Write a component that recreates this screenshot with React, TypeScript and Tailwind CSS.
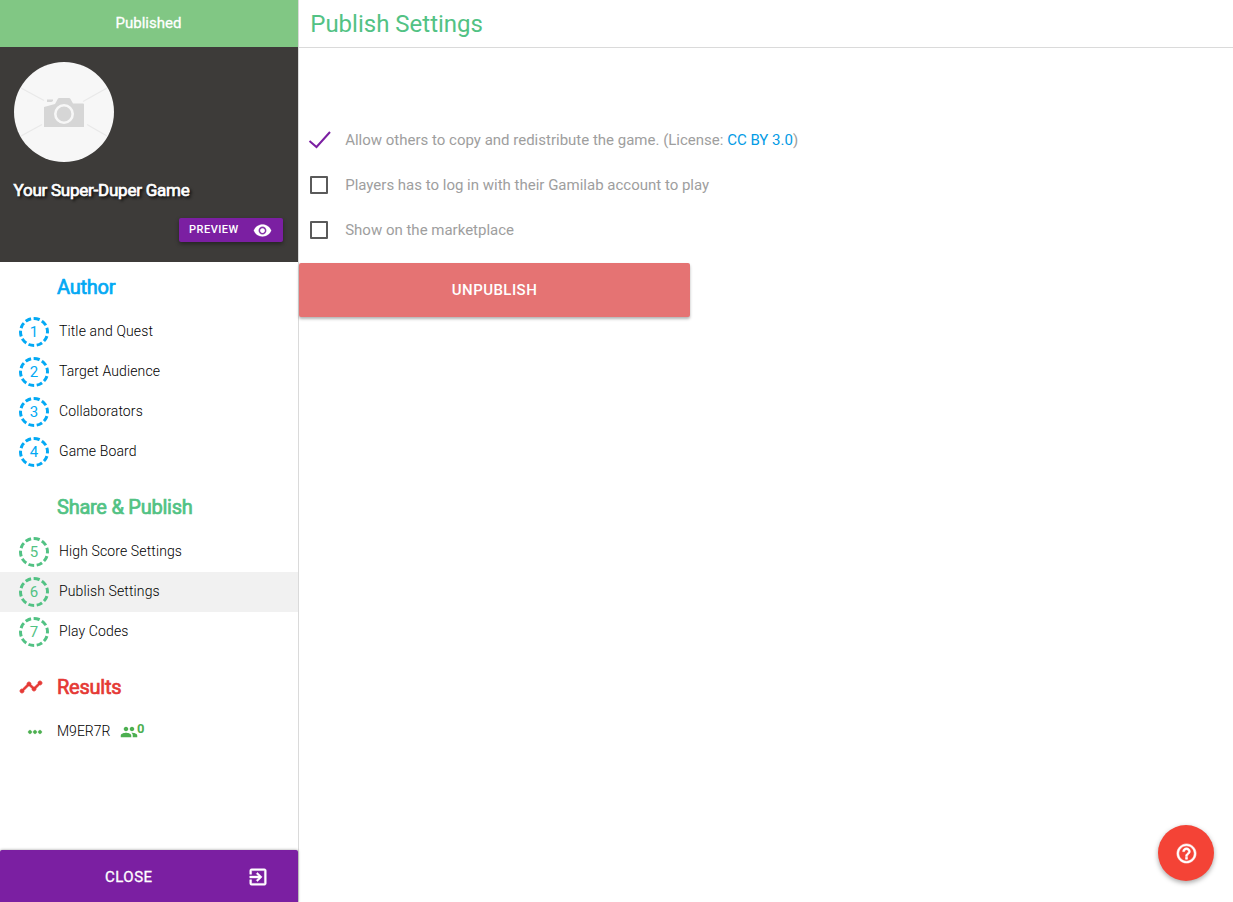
import React from "react";
import {
  MdExitToApp,
  MdHelpOutline,
  MdMoreHoriz,
  MdPeople,
  MdRemoveRedEye,
  MdTimeline,
} from "react-icons/md";

type Step = { n: number; label: string; active?: boolean };

const authorSteps: Step[] = [
  { n: 1, label: "Title and Quest" },
  { n: 2, label: "Target Audience" },
  { n: 3, label: "Collaborators" },
  { n: 4, label: "Game Board" },
];

const publishSteps: Step[] = [
  { n: 5, label: "High Score Settings" },
  { n: 6, label: "Publish Settings", active: true },
  { n: 7, label: "Play Codes" },
];

function StepRow({ step, tone }: { step: Step; tone: string }) {
  return (
    <li className={`flex h-10 items-center pl-[19px] ${step.active ? "bg-[#f1f1f1]" : ""}`}>
      <span
        className={`flex size-[30px] shrink-0 items-center justify-center rounded-full border-3 border-dashed text-[15px] leading-6 ${tone}`}
      >
        {step.n}
      </span>
      <span className="ml-2.5 pb-0.5 text-sm font-light tracking-[0.12px] text-black">{step.label}</span>
    </li>
  );
}

function GroupTitle({ children, tone, icon }: { children: React.ReactNode; tone: string; icon?: React.ReactNode }) {
  return (
    <h2 className={`flex h-[50px] items-center text-xl tracking-[-0.25px] ${tone}`}>
      <span className="flex w-[57px] shrink-0 pl-[19px]">{icon}</span>
      <span className="[-webkit-text-stroke:0.7px_currentColor]">{children}</span>
    </h2>
  );
}

function PhotoPlaceholder() {
  return (
    <svg viewBox="0 0 100 100" className="size-[100px] rounded-full bg-[#f7f7f7]">
      <g stroke="#e9e9e9" strokeWidth="1.3">
        <path d="M7 26 30 38.500M93 26 69 39.500M7 74 28 62.500M93 74 73 62.500" />
      </g>
      <path
        fill="#d6d6d6"
        d="M30 45 41 42 44 36.500Q44.500 36 45 36H55Q56 36 56.500 37L59 41.500H69Q70 41.500 70 42.500V65H30ZM33 37.500H39V39L37.500 40H33Z"
      />
      <circle cx="50" cy="52" r="8.700" fill="#d6d6d6" stroke="#f7f7f7" strokeWidth="2.600" />
    </svg>
  );
}

function Option({ checked, children }: { checked?: boolean; children: React.ReactNode }) {
  return (
    <label className="flex h-[45px] items-center">
      <span className="flex w-[46.2px] shrink-0 pb-px pl-2.5">
        {checked ? (
          <svg viewBox="0 0 24 20" className="-ml-px h-5 w-6" fill="none">
            <path d="M1.500 11 8.500 17 22 2" stroke="#7b1fa2" strokeWidth="2" />
          </svg>
        ) : (
          <span className="ml-px size-[18px] rounded-[1px] border-2 border-[#5a5a5a]" />
        )}
      </span>
      <span className="text-[15px] leading-[25px] text-[#9e9e9e]">{children}</span>
    </label>
  );
}

export default function App() {
  return (
    <div className="flex h-[902px] w-full overflow-hidden bg-white font-['Roboto',sans-serif]">
      <aside className="flex w-[299px] shrink-0 flex-col border-r border-[#dadada]">
        <div className="flex h-[47px] items-center justify-center bg-[#81c784] pr-px text-[15px] text-white">
          <span className="[-webkit-text-stroke:0.3px_currentColor]">Published</span>
        </div>
        <div className="flex h-[215px] flex-col bg-[#3d3b39] px-3.5 pt-[15px]">
          <PhotoPlaceholder />
          <h1 className="mt-4 -ml-[0.5px] text-[17px] leading-6 tracking-[-0.24px] text-white [-webkit-text-stroke:0.7px_currentColor] [text-shadow:2px_2px_3px_#000]">
            Your Super-Duper Game
          </h1>
          <button className="mt-4 mr-px flex h-6 w-[104px] items-center self-end rounded-xs bg-[#7b1fa2] pl-2.5 text-[11px] font-medium tracking-[0.5px] text-white shadow-[0_2px_4px_rgba(0,0,0,0.4)]">
            PREVIEW
            <MdRemoveRedEye
              className="ml-[14.5px] size-[19px] [&>path:first-child]:stroke-none"
              stroke="currentColor"
              strokeWidth={0.3}
            />
          </button>
        </div>
        <nav className="flex grow flex-col">
          <GroupTitle tone="text-[#03a9f4]">Author</GroupTitle>
          <ul>
            {authorSteps.map((s) => (
              <StepRow key={s.n} step={s} tone="border-[#03a9f4] text-[#03a9f4]" />
            ))}
          </ul>
          <div className="h-2.5" />
          <GroupTitle tone="text-[#52c284]">Share &amp; Publish</GroupTitle>
          <ul>
            {publishSteps.map((s) => (
              <StepRow key={s.n} step={s} tone="border-[#52c284] text-[#52c284]" />
            ))}
          </ul>
          <div className="h-2.5" />
          <GroupTitle
            tone="text-[#e53935]"
            icon={
              <MdTimeline
                className="size-6 [&>path:first-child]:stroke-none"
                stroke="currentColor"
                strokeWidth={0.8}
              />
            }
          >
            Results
          </GroupTitle>
          <div className="flex h-10 items-center">
            <MdMoreHoriz
              className="ml-[25px] size-5 text-[#4caf50] [&>path:first-child]:stroke-none"
              stroke="currentColor"
              strokeWidth={0.8}
            />
            <span className="ml-3 pb-0.5 text-sm font-light text-black">M9ER7R</span>
            <MdPeople className="ml-2.5 size-[18px] text-[#4caf50]" />
            <span className="-ml-[1.5px] pb-1.5 text-[13px] font-bold text-[#4caf50]">0</span>
          </div>
        </nav>
        <button className="flex h-[52px] items-center justify-between rounded-t-xs bg-[#7b1fa2] pt-0.5 pr-[29px] pl-[105px] text-[15px] text-white shadow-[0_0_3px_rgba(0,0,0,0.4)]">
          <span className="tracking-[0.5px] [-webkit-text-stroke:0.3px_currentColor]">CLOSE</span>
          <MdExitToApp
            className="size-[22px] [&>path:first-child]:stroke-none"
            stroke="currentColor"
            strokeWidth={0.5}
          />
        </button>
      </aside>
      <main className="flex min-w-0 grow flex-col">
        <header className="flex h-12 items-center border-b border-[#dadada] pl-[11.25px]">
          <h1 className="text-2xl text-[#52c284]">Publish Settings</h1>
        </header>
        <section className="flex flex-col pt-[70px]">
          <Option checked>
            Allow others to copy and redistribute the game. (License:{" "}
            <a className="text-[#039be5]">CC BY 3.0</a>)
          </Option>
          <Option>Players has to log in with their Gamilab account to play</Option>
          <Option>Show on the marketplace</Option>
          <button className="mt-2.5 h-[54px] w-[391px] rounded-xs bg-[#e57373] text-[15px] font-medium tracking-[0.45px] text-white shadow-[0_2px_3px_rgba(0,0,0,0.3)]">
            UNPUBLISH
          </button>
        </section>
      </main>
      <button className="absolute top-[825px] left-[1158px] flex size-14 items-center justify-center rounded-full bg-[#f44336] text-white shadow-[0_2px_5px_rgba(0,0,0,0.35)]">
        <MdHelpOutline
          className="size-[23px] [&>path:first-child]:stroke-none"
          stroke="currentColor"
          strokeWidth={0.6}
        />
      </button>
    </div>
  );
}
